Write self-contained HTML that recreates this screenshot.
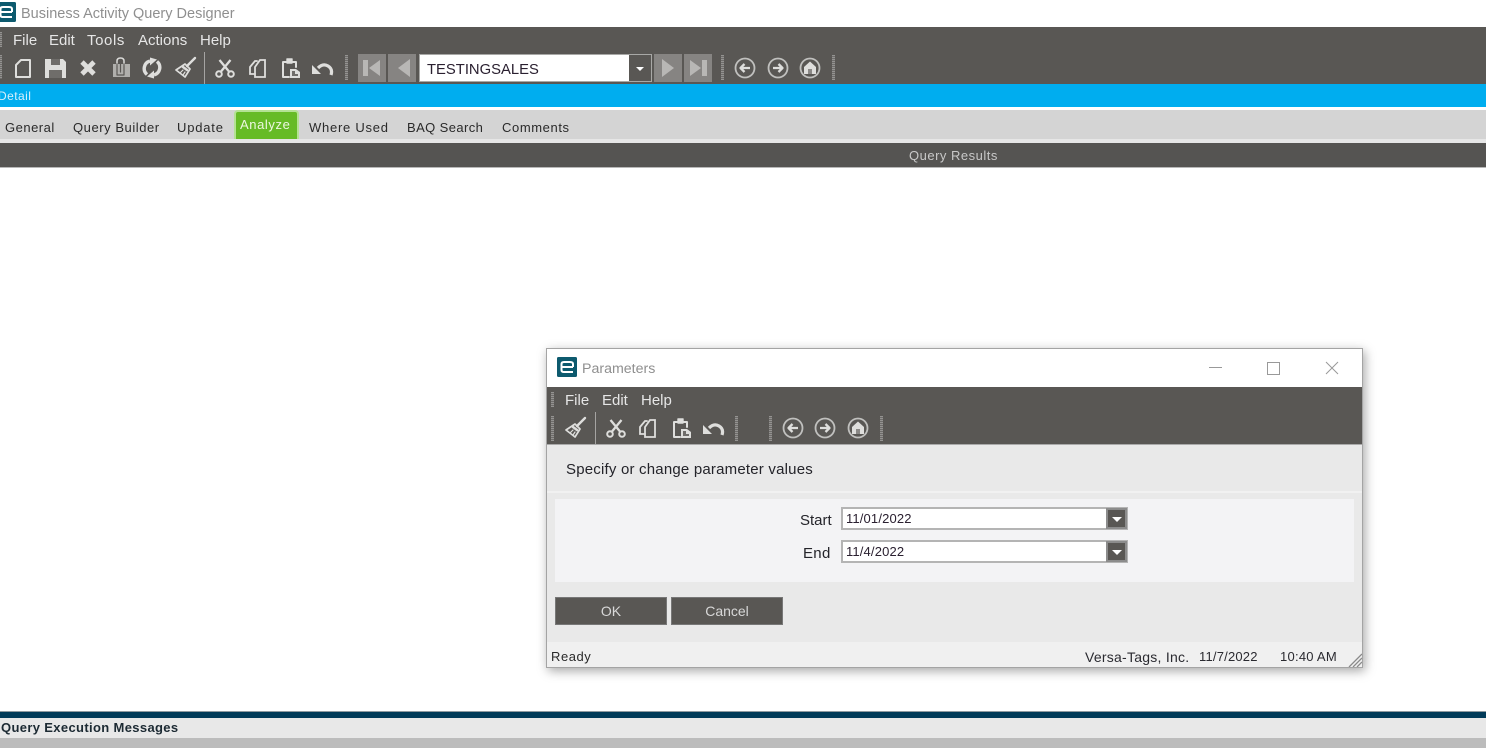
<!DOCTYPE html>
<html><head><meta charset="utf-8"><title>Business Activity Query Designer</title>
<style>
html,body{margin:0;padding:0;width:1486px;height:748px;overflow:hidden;background:#fff}
body{position:relative;font-family:"Liberation Sans",Arial,sans-serif}
.a{position:absolute}
.t{position:absolute;white-space:nowrap;line-height:16px}
.m{color:#e6e6e6;font-size:15px}
.tab{color:#2a2a2a;font-size:13px;letter-spacing:.55px}
.ic{position:absolute;width:24px;height:24px;fill:none;stroke:#dededc;stroke-width:2;stroke-linejoin:round;stroke-linecap:round;filter:blur(.35px)}
.grip{position:absolute;width:3px;background:repeating-linear-gradient(#949391 0 1px,#6e6c6a 1px 2px)}
.nav{position:absolute;top:54px;width:28px;height:28px;background:#868482}
.nav svg{position:absolute;left:0;top:0;width:28px;height:28px;fill:#b8b7b5}
.btn{position:absolute;top:597px;height:28px;background:#595754;box-shadow:inset 0 0 0 1px #777;color:#d8d8d8;font-size:14px;text-align:center;line-height:28px}
.inp{position:absolute;left:841px;width:287px;height:23px;box-sizing:border-box;border:2px solid #b4b4b4;background:#fff;font-size:13px;letter-spacing:.15px;line-height:20px;padding-left:3px;color:#2a2030}
.dd{position:absolute;right:-1px;top:-1px;width:21px;height:21px;box-sizing:border-box;background:#595754;border:2px solid #8c8c8c}
.dd:after{content:"";position:absolute;left:4px;top:7px;border:5px solid transparent;border-top:5px solid #fff;border-bottom:0}
</style></head><body>
<svg width="0" height="0" style="position:absolute"><defs>
<symbol id="new" viewBox="0 0 24 24"><path d="M10 4H19V21H5V9Z"/></symbol>
<symbol id="save" viewBox="0 0 24 24"><path d="M2 3H20L23 6V22H2Z" fill="#dededc" stroke="none"/><path d="M8 3H17V9H8ZM6 14H19V22H6Z" fill="#6f6d6a" stroke="none"/></symbol>
<symbol id="del" viewBox="0 0 24 24"><path d="M6 6L18 18M18 6L6 18" stroke-width="4.8" stroke-linecap="butt"/></symbol>
<symbol id="clip" viewBox="0 0 24 24"><path d="M4 8H21V21H4Z" fill="#b0afac" stroke="none"/><path d="M8 9V5Q8 2 11.500 2T15 5V9" stroke="#dcdcda" stroke-width="1.500"/><path d="M8 8V19H15V8M11.500 6V16" stroke="#595754" stroke-width="1.200"/></symbol>
<symbol id="ref" viewBox="0 0 24 24"><path d="M10 5A7.800 7.800 0 0 0 7 18.500" stroke-width="3.400" stroke-linecap="butt"/><path d="M14 19A7.800 7.800 0 0 0 17 5.500" stroke-width="3.400" stroke-linecap="butt"/><path d="M10 1.500V9.500L17 3.500ZM14 22.500V14.500L7 20.500Z" fill="#dededc" stroke="none"/></symbol>
<symbol id="brm" viewBox="0 0 24 24"><path d="M22 2L14 10" stroke-width="2.400"/><path d="M12 8L17 13L12 21L3 14Z" stroke-width="1.700"/><path d="M10 11L14 14" stroke-width="2.500"/><path d="M7 17L10 14M10 19L12 16" stroke-width="1.200"/></symbol>
<symbol id="cut" viewBox="0 0 24 24"><circle cx="6" cy="18" r="2.800" stroke-width="2"/><circle cx="18" cy="18" r="2.800" stroke-width="2"/><path d="M8 15.500L17.500 4M16 15.500L6.500 4" stroke-width="2.300" stroke-linecap="butt"/></symbol>
<symbol id="cpy" viewBox="0 0 24 24"><path d="M9 21V11L14 4H19V21Z" stroke-width="1.800" stroke-linejoin="miter"/><path d="M9 18H4V11L9 5H11" stroke-width="1.800" stroke-linejoin="miter"/></symbol>
<symbol id="pst" viewBox="0 0 24 24"><path d="M11 21H5V6H18V11" stroke-width="2"/><path d="M9 7V3H14V7Z" fill="#dededc" stroke-width="1.400"/><path d="M12 13H18L22 16V22H12Z" fill="#dededc" stroke="none"/><path d="M14 15H17V18H20V20H14Z" fill="#6f6d6a" stroke="none"/></symbol>
<symbol id="und" viewBox="0 0 24 24"><path d="M8 12Q13 7 18 10T21 19" stroke-width="3.200" stroke-linecap="butt"/><path d="M2 9L11 18H2Z" fill="#dededc" stroke="none"/></symbol>
<symbol id="bk" viewBox="0 0 24 24"><circle cx="12" cy="12" r="9.500" stroke="#c0c0be" stroke-width="1.800"/><path d="M17 12H8M11.500 8L7.500 12L11.500 16" stroke-width="2.300" stroke-linecap="butt"/></symbol>
<symbol id="fw" viewBox="0 0 24 24"><circle cx="12" cy="12" r="9.500" stroke="#c0c0be" stroke-width="1.800"/><path d="M7 12H16M12.500 8L16.500 12L12.500 16" stroke-width="2.300" stroke-linecap="butt"/></symbol>
<symbol id="hm" viewBox="0 0 24 24"><circle cx="12" cy="12" r="9.500" stroke="#c0c0be" stroke-width="1.800"/><path d="M12 5.500L18 11V18H6V11Z" fill="#dededc" stroke="none"/><path d="M10 13H14V18H10Z" fill="#8a8886" stroke="none"/></symbol>
<symbol id="logo" viewBox="0 0 20 20"><rect width="20" height="20" rx="1.500" fill="#0d5a6e"/><path d="M16 10H4.500M4.500 10V7Q4.500 5 7 5H13Q16 5 16 7V10M4.500 10V13Q4.500 15 7 15H16" fill="none" stroke="#fff" stroke-width="2"/></symbol>
</defs></svg>

<!-- main title -->
<svg class="a" style="left:-4px;top:2px;width:20px;height:20px"><use href="#logo"/></svg>
<div class="t" style="left:21px;top:6px;font-size:14.5px;color:#8f8f8f">Business Activity Query Designer</div>

<!-- main toolbar -->
<div class="a" style="left:0;top:27px;width:1486px;height:57px;background:#595754"></div>
<div class="grip" style="left:0;top:32px;height:15px;width:2px"></div>
<div class="grip" style="left:0;top:55px;height:24px;width:2px"></div>
<div class="t m" style="left:13px;top:33px">File</div>
<div class="t m" style="left:49px;top:33px">Edit</div>
<div class="t m" style="left:87px;top:33px;letter-spacing:.6px">Tools</div>
<div class="t m" style="left:138px;top:33px">Actions</div>
<div class="t m" style="left:200px;top:33px">Help</div>
<svg class="ic" style="left:11px;top:56px"><use href="#new"/></svg>
<svg class="ic" style="left:43px;top:56px"><use href="#save"/></svg>
<svg class="ic" style="left:76px;top:56px"><use href="#del"/></svg>
<svg class="ic" style="left:109px;top:56px"><use href="#clip"/></svg>
<svg class="ic" style="left:140px;top:56px"><use href="#ref"/></svg>
<svg class="ic" style="left:173px;top:56px"><use href="#brm"/></svg>
<div class="a" style="left:204px;top:52px;width:1px;height:32px;background:#a5a4a2"></div>
<svg class="ic" style="left:213px;top:56px"><use href="#cut"/></svg>
<svg class="ic" style="left:246px;top:56px"><use href="#cpy"/></svg>
<svg class="ic" style="left:278px;top:56px"><use href="#pst"/></svg>
<svg class="ic" style="left:310px;top:56px"><use href="#und"/></svg>
<div class="grip" style="left:345px;top:55px;height:25px"></div>
<div class="nav" style="left:358px"><svg viewBox="0 0 28 28"><path d="M5 6H10V22H5ZM22 6V22L11 14Z"/></svg></div>
<div class="nav" style="left:388px"><svg viewBox="0 0 28 28"><path d="M22 5V23L10 14Z"/></svg></div>
<div class="a" style="left:419px;top:54px;width:233px;height:28px;box-sizing:border-box;border:1px solid #a8a8a6;background:#fff"></div>
<div class="t" style="left:427px;top:62px;font-size:14.8px;color:#2a2030">TESTINGSALES</div>
<div class="a" style="left:629px;top:55px;width:22px;height:26px;background:#595754"></div>
<div class="a" style="left:636px;top:67px;border:4px solid transparent;border-top:4px solid #fff;border-bottom:0;width:0;height:0"></div>
<div class="nav" style="left:654px"><svg viewBox="0 0 28 28"><path d="M8 5V23L20 14Z"/></svg></div>
<div class="nav" style="left:684px"><svg viewBox="0 0 28 28"><path d="M6 6L17 14L6 22ZM18 6H23V22H18Z"/></svg></div>
<div class="grip" style="left:721px;top:55px;height:25px"></div>
<svg class="ic" style="left:733px;top:56px"><use href="#bk"/></svg>
<svg class="ic" style="left:766px;top:56px"><use href="#fw"/></svg>
<svg class="ic" style="left:798px;top:56px"><use href="#hm"/></svg>
<div class="grip" style="left:832px;top:55px;height:25px"></div>

<!-- detail bar -->
<div class="a" style="left:0;top:84px;width:1486px;height:23px;background:#00adef"></div>
<div class="t" style="left:-2px;top:88px;font-size:12px;letter-spacing:.45px;color:#d8f0fb">Detail</div>

<!-- tabs -->
<div class="a" style="left:0;top:110px;width:1486px;height:29px;background:#d4d4d4"></div>
<div class="a" style="left:0;top:139px;width:1486px;height:4px;background:#e6e6e6"></div>
<div class="t tab" style="left:5px;top:120px;letter-spacing:.5px">General</div>
<div class="t tab" style="left:73px;top:120px">Query Builder</div>
<div class="t tab" style="left:177px;top:120px;letter-spacing:.8px">Update</div>
<div class="a" style="left:234px;top:110px;width:65px;height:29px;box-sizing:border-box;background:#66bb26;border:2px solid #b4e294;border-bottom:0;border-radius:4px 4px 0 0"></div>
<div class="t tab" style="left:240px;top:117px;color:#ecf7e0;letter-spacing:.6px">Analyze</div>
<div class="t tab" style="left:309px;top:120px;letter-spacing:.75px">Where Used</div>
<div class="t tab" style="left:407px;top:120px;letter-spacing:.4px">BAQ Search</div>
<div class="t tab" style="left:502px;top:120px;letter-spacing:.6px">Comments</div>

<!-- results header -->
<div class="a" style="left:0;top:143px;width:1486px;height:24px;background:#555452"></div>
<div class="a" style="left:0;top:167px;width:1486px;height:1px;background:#b8b8b8"></div>
<div class="t" style="left:909px;top:148px;font-size:13px;letter-spacing:.5px;color:#c8c8c8">Query Results</div>

<!-- bottom -->
<div class="a" style="left:0;top:711px;width:1486px;height:1px;background:#909a9f"></div>
<div class="a" style="left:0;top:712px;width:1486px;height:6px;background:#003a58"></div>
<div class="a" style="left:0;top:718px;width:1486px;height:20px;background:#e8e8e8"></div>
<div class="a" style="left:0;top:738px;width:1486px;height:10px;background:#bcbcbc"></div>
<div class="t" style="left:1px;top:720px;font-size:13px;font-weight:bold;letter-spacing:.35px;color:#1c2a33">Query Execution Messages</div>

<!-- dialog -->
<div class="a" style="left:546px;top:348px;width:817px;height:320px;box-sizing:border-box;border:1px solid #a4a4a4;background:#e9e9e9;box-shadow:2px 3px 10px rgba(0,0,0,.35)"></div>
<div class="a" style="left:547px;top:349px;width:815px;height:38px;background:#fff"></div>
<svg class="a" style="left:557px;top:357px;width:20px;height:20px"><use href="#logo"/></svg>
<div class="t" style="left:582px;top:361px;font-size:14.2px;color:#8f8f8f">Parameters</div>
<div class="a" style="left:1209px;top:367px;width:13px;height:1px;background:#999"></div>
<div class="a" style="left:1267px;top:362px;width:11px;height:11px;border:1px solid #999"></div>
<svg class="a" style="left:1325px;top:361px;width:14px;height:14px" viewBox="0 0 14 14"><path d="M1 1L13 13M13 1L1 13" stroke="#999" stroke-width="1" fill="none"/></svg>

<div class="a" style="left:547px;top:387px;width:815px;height:57px;background:#595754"></div>
<div class="a" style="left:547px;top:444px;width:815px;height:1px;background:#aaa"></div>
<div class="grip" style="left:551px;top:392px;height:15px"></div>
<div class="grip" style="left:551px;top:416px;height:25px"></div>
<div class="t m" style="left:565px;top:393px">File</div>
<div class="t m" style="left:602px;top:393px">Edit</div>
<div class="t m" style="left:641px;top:393px">Help</div>
<svg class="ic" style="left:563px;top:416px"><use href="#brm"/></svg>
<div class="a" style="left:595px;top:412px;width:1px;height:32px;background:#a5a4a2"></div>
<svg class="ic" style="left:604px;top:416px"><use href="#cut"/></svg>
<svg class="ic" style="left:636px;top:416px"><use href="#cpy"/></svg>
<svg class="ic" style="left:669px;top:416px"><use href="#pst"/></svg>
<svg class="ic" style="left:701px;top:416px"><use href="#und"/></svg>
<div class="grip" style="left:735px;top:416px;height:25px"></div>
<div class="grip" style="left:769px;top:416px;height:25px"></div>
<svg class="ic" style="left:781px;top:416px"><use href="#bk"/></svg>
<svg class="ic" style="left:813px;top:416px"><use href="#fw"/></svg>
<svg class="ic" style="left:846px;top:416px"><use href="#hm"/></svg>
<div class="grip" style="left:880px;top:416px;height:25px"></div>

<div class="t" style="left:566px;top:462px;font-size:15px;letter-spacing:.2px;color:#24242a">Specify or change parameter values</div>
<div class="a" style="left:547px;top:491px;width:815px;height:2px;background:#f1f1f1"></div>
<div class="a" style="left:555px;top:499px;width:799px;height:83px;background:#f3f3f5"></div>
<div class="t" style="left:800px;top:513px;font-size:15px;color:#24242a">Start</div>
<div class="t" style="left:803px;top:546px;font-size:15px;letter-spacing:.3px;color:#24242a">End</div>
<div class="inp" style="top:507px">11/01/2022<div class="dd"></div></div>
<div class="inp" style="top:540px">11/4/2022<div class="dd"></div></div>
<div class="btn" style="left:555px;width:112px">OK</div>
<div class="btn" style="left:671px;width:112px">Cancel</div>

<div class="a" style="left:547px;top:642px;width:815px;height:25px;background:#f0f0f0"></div>
<div class="t" style="left:551px;top:649px;font-size:13px;letter-spacing:.55px;color:#2a2a2a">Ready</div>
<div class="t" style="left:1085px;top:649px;font-size:14px;letter-spacing:.25px;color:#2a2a30">Versa-Tags, Inc.</div>
<div class="t" style="left:1199px;top:649px;font-size:13px;letter-spacing:.2px;color:#2a2a30">11/7/2022</div>
<div class="t" style="left:1280px;top:649px;font-size:13px;letter-spacing:.25px;color:#2a2a30">10:40 AM</div>
<svg class="a" style="left:1348px;top:653px;width:14px;height:14px" viewBox="0 0 14 14"><path d="M1 14L14 1M5 14L14 5M9 14L14 9" stroke="#8a8a8a" stroke-width="1.300" fill="none"/></svg>
</body></html>
